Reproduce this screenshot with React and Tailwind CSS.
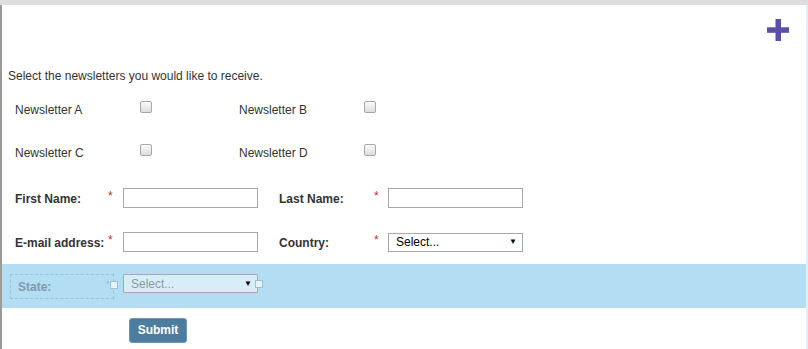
import React from "react";

const font = { fontFamily: '"Liberation Sans", Arial, sans-serif' };

const Check = () => (
  <span className="inline-block w-[12px] h-[12px] rounded-[2px] border border-[#a8a8a8] bg-gradient-to-b from-[#fbfbfb] to-[#dcdcdc]" />
);

const Star = ({ className = "" }) => (
  <span className={`text-[#b33] text-[12px] font-normal ${className}`}>*</span>
);

const TextBox = () => (
  <div className="w-[135px] h-[20px] border border-[#a9a9a9] bg-white" />
);

const SelectBox = ({ className = "", text = "text-[#000]" }) => (
  <div
    className={`w-[135px] h-[19px] border border-[#a9a9a9] flex items-center justify-between pl-[7px] pr-[5px] font-normal ${className}`}
  >
    <span className={`text-[12px] ${text}`}>Select...</span>
    <span className="text-[8px] leading-none text-black">▼</span>
  </div>
);

export default function App() {
  return (
    <div className="w-[808px] h-[349px] bg-white text-[#333] overflow-hidden" style={font}>
      <div className="h-[5px] bg-[#dedede]" />
      <div className="h-[344px] border-l-2 border-l-[#9a9a9a] border-r-2 border-r-[#e2eef5] relative">
        {/* add button */}
        <div className="flex justify-end pr-[17px] pt-[14px] h-[42px]">
          <svg width="22" height="22" viewBox="0 0 22 22">
            <rect x="8.5" y="0" width="5.5" height="22" fill="#5b4fa6" />
            <rect x="0" y="8.3" width="22" height="5.5" fill="#5b4fa6" />
          </svg>
        </div>

        <p className="text-[12px] pl-[6px] mt-[22px] leading-[14px]">
          Select the newsletters you would like to receive.
        </p>

        <div className="pl-[13px] text-[12px]">
          <div className="flex items-center h-[14px] mt-[17px]">
            <span className="w-[125px] pt-[6px]">Newsletter A</span>
            <Check />
            <span className="w-[125px] ml-[87px] pt-[6px]">Newsletter B</span>
            <Check />
          </div>
          <div className="flex items-center h-[14px] mt-[29px]">
            <span className="w-[125px] pt-[6px]">Newsletter C</span>
            <Check />
            <span className="w-[125px] ml-[87px] pt-[6px]">Newsletter D</span>
            <Check />
          </div>

          <div className="flex items-center font-bold mt-[31px] h-[20px]">
            <span className="w-[93px] pt-[1px]">First Name:</span>
            <Star className="w-[15px] -mt-[4px]" />
            <TextBox />
            <span className="w-[95px] ml-[21px] pt-[1px]">Last Name:</span>
            <Star className="w-[14px] -mt-[4px]" />
            <TextBox />
          </div>

          <div className="flex items-center font-bold mt-[24px] h-[20px]">
            <span className="w-[93px] pt-[1px]">E-mail address:</span>
            <Star className="w-[15px] -mt-[4px]" />
            <TextBox />
            <span className="w-[95px] ml-[21px] pt-[1px]">Country:</span>
            <Star className="w-[14px] -mt-[4px]" />
            <SelectBox className="bg-white" />
          </div>
        </div>

        <div className="mt-[12px] h-[44px] bg-[#b2ddf3] flex items-start pl-[8px] pt-[10px]">
          <div className="relative w-[104px] h-[25px] border border-dashed border-[#9fc3d6] flex items-center pl-[7px] text-[12px] font-bold text-[#7f9aab]">
            State:
            <span className="absolute right-[-5px] top-[6px] w-[8px] h-[8px] border border-[#9ec1d5] bg-[#e5f3fb]" />
            <span className="absolute right-[4px] top-[4px] text-[7px] text-[#9bb]">*</span>
          </div>
          <div className="relative ml-[9px]">
            <SelectBox className="bg-[#d9edf9] border-[#a4c7dc] rounded-[1px]" text="text-[#8a9aa5]" />
            <span className="absolute right-[-5px] top-[6px] w-[8px] h-[8px] border border-[#9ec1d5] bg-[#e5f3fb]" />
          </div>
        </div>

        <div className="pl-[127px] pt-[9px]">
          <button className="w-[58px] h-[25px] rounded-[3px] bg-[#4c7d9e] border border-[#6d97b3] text-white text-[12px] font-bold">
            Submit
          </button>
        </div>
      </div>
    </div>
  );
}
